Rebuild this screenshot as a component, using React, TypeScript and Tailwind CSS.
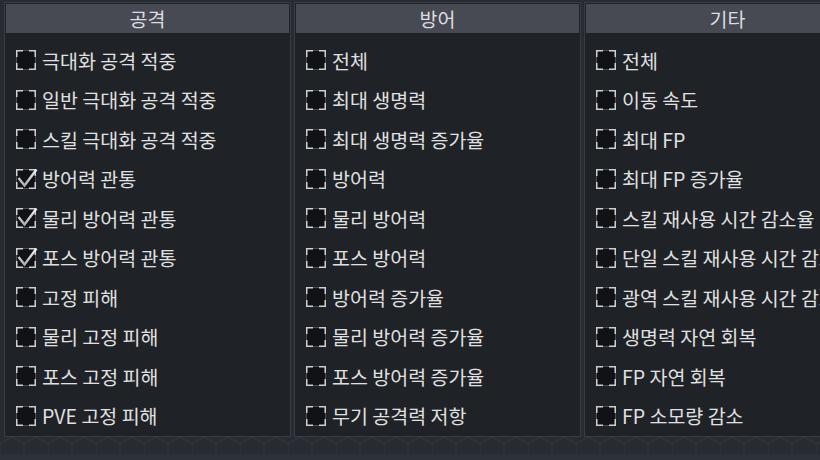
import React from 'react';

interface Option {
  label: string;
  checked?: boolean;
}

interface Column {
  title: string;
  options: Option[];
}

const columns: Column[] = [
  {
    title: '공격',
    options: [
      { label: '극대화 공격 적중' },
      { label: '일반 극대화 공격 적중' },
      { label: '스킬 극대화 공격 적중' },
      { label: '방어력 관통', checked: true },
      { label: '물리 방어력 관통', checked: true },
      { label: '포스 방어력 관통', checked: true },
      { label: '고정 피해' },
      { label: '물리 고정 피해' },
      { label: '포스 고정 피해' },
      { label: 'PVE 고정 피해' },
    ],
  },
  {
    title: '방어',
    options: [
      { label: '전체' },
      { label: '최대 생명력' },
      { label: '최대 생명력 증가율' },
      { label: '방어력' },
      { label: '물리 방어력' },
      { label: '포스 방어력' },
      { label: '방어력 증가율' },
      { label: '물리 방어력 증가율' },
      { label: '포스 방어력 증가율' },
      { label: '무기 공격력 저항' },
    ],
  },
  {
    title: '기타',
    options: [
      { label: '전체' },
      { label: '이동 속도' },
      { label: '최대 FP' },
      { label: '최대 FP 증가율' },
      { label: '스킬 재사용 시간 감소율' },
      { label: '단일 스킬 재사용 시간 감소율' },
      { label: '광역 스킬 재사용 시간 감소율' },
      { label: '생명력 자연 회복' },
      { label: 'FP 자연 회복' },
      { label: 'FP 소모량 감소' },
    ],
  },
];

const CheckBox: React.FC<{ checked?: boolean }> = ({ checked }) => (
  <svg width="20" height="20" viewBox="0 0 20 20" className="shrink-0 overflow-visible">
    <defs>
      <linearGradient id="chk" x1="0" y1="0" x2="0" y2="1">
        <stop offset="0" stopColor="#f2f2f2" />
        <stop offset="1" stopColor="#a9acb1" />
      </linearGradient>
    </defs>
    <rect x="0" y="0" width="20" height="20" fill="#101215" />
    <path d="M0.5 0.5H19.5V19.5H0.5Z" fill="none" stroke="#4a4d53" strokeWidth="1" />
    <path
      d="M0.75 7V0.75H7 M13 0.75H19.25V7 M19.25 13V19.25H13 M7 19.25H0.75V13"
      fill="none"
      stroke="#cfd0d3"
      strokeWidth="1.5"
    />
    {checked && (
      <path
        d="M2.5 9 L8.5 16.5 L20.5 0.5"
        fill="none"
        stroke="url(#chk)"
        strokeWidth="2.4"
        strokeLinejoin="miter"
      />
    )}
  </svg>
);

const Panel: React.FC<{ column: Column }> = ({ column }) => (
  <div className="w-[287px] shrink-0 h-[435px] border border-[#393c43] bg-[#1f2227] p-px flex flex-col">
    <div className="h-[31px] bg-[#474a53] flex items-center justify-center text-[19.5px] text-[#dcdde0]">
      {column.title}
    </div>
    <div className="flex flex-col pt-[7px] pl-[10px]">
      {column.options.map((o) => (
        <div key={o.label} className="h-[39.5px] flex items-center gap-[6px] whitespace-nowrap">
          <CheckBox checked={o.checked} />
          <span className="text-[19.5px] leading-none text-[#e0e0e0] pt-[1px]">{o.label}</span>
        </div>
      ))}
    </div>
  </div>
);

const HexStrip: React.FC = () => (
  <svg width="820" height="24" className="block">
    <defs>
      <pattern id="hex" width="48" height="28" patternUnits="userSpaceOnUse">
        <path
          d="M0 7 L12 0 L24 7 L24 21 L12 28 L0 21 Z M24 7 L36 0 L48 7"
          fill="none"
          stroke="#343943"
          strokeWidth="1"
        />
      </pattern>
    </defs>
    <rect width="820" height="24" fill="#272b32" />
    <rect width="820" height="24" fill="url(#hex)" />
    <rect y="17" width="820" height="7" fill="#2d3138" />
  </svg>
);

export default function App() {
  return (
    <div
      className="w-[820px] h-[460px] overflow-hidden bg-[#272b32] flex flex-col"
      style={{ fontFamily: '"Noto Sans CJK KR", "Noto Sans", sans-serif' }}
    >
      <div className="flex gap-[3px] pl-[4px] pt-[2px] h-[437px]">
        {columns.map((c) => (
          <Panel key={c.title} column={c} />
        ))}
      </div>
      <HexStrip />
    </div>
  );
}
